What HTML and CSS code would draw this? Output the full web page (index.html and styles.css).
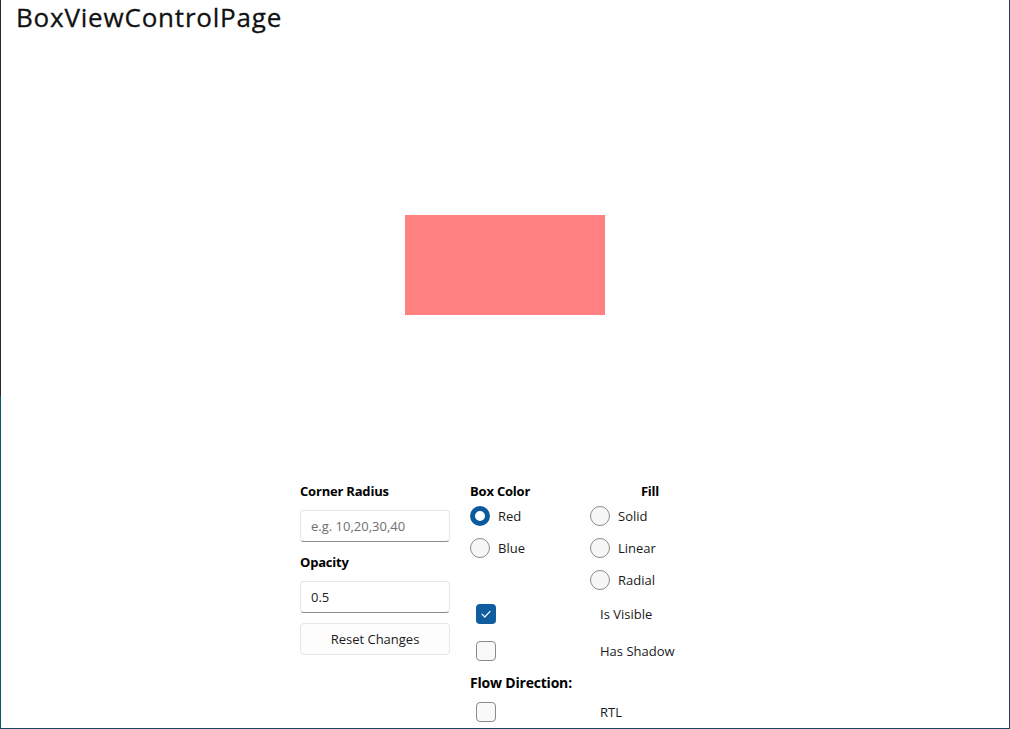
FILE: index.html
```html
<!DOCTYPE html>
<html>
<head>
<meta charset="utf-8">
<link rel="stylesheet" href="styles.css">
</head>
<body>
<div class="frame">
  <h1 class="title">BoxViewControlPage</h1>
  <div class="stage">
    <div class="box"></div>
  </div>
  <div class="controls">
    <div class="left">
      <div class="label">Corner Radius</div>
      <div class="entry placeholder">e.g. 10,20,30,40</div>
      <div class="label opacity">Opacity</div>
      <div class="entry">0.5</div>
      <div class="button">Reset Changes</div>
    </div>
    <div class="right">
      <div class="label">Box Color</div>
      <div class="label center">Fill</div>

      <div class="radio-row"><span class="radio checked"></span><span>Red</span></div>
      <div class="radio-row"><span class="radio"></span><span>Solid</span></div>

      <div class="radio-row"><span class="radio"></span><span>Blue</span></div>
      <div class="radio-row"><span class="radio"></span><span>Linear</span></div>

      <div class="radio-row"></div>
      <div class="radio-row"><span class="radio"></span><span>Radial</span></div>

      <div class="check-cell"><span class="check checked"><svg viewBox="0 0 20 20" width="20" height="20"><path d="M6 10.2 L8.8 13 L14 7.4" fill="none" stroke="#fff" stroke-width="1.2" stroke-linecap="round" stroke-linejoin="round"/></svg></span></div>
      <div class="check-label">Is Visible</div>

      <div class="check-cell"><span class="check"></span></div>
      <div class="check-label">Has Shadow</div>

      <div class="label flow">Flow Direction:</div>

      <div class="check-cell"><span class="check"></span></div>
      <div class="check-label">RTL</div>
    </div>
  </div>
</div>
</body>
</html>
```
FILE: styles.css
```css
* { box-sizing: border-box; }
html, body { margin: 0; padding: 0; }
body {
  width: 1010px;
  height: 729px;
  overflow: hidden;
  background: #fff;
  font-family: "Open Sans", "Noto Sans", sans-serif;
  color: #1a1a1a;
}
.frame {
  width: 1010px;
  height: 729px;
  border-right: 1px solid #1d3d63;
  border-bottom: 1px solid #1b4a60;
  background:
    linear-gradient(#2a2a2a, #2a2a2a) left top / 1px 396px no-repeat,
    linear-gradient(#0e5a72, #0e5a72) left 396px / 1px 333px no-repeat,
    #fff;
  padding-left: 1px;
  display: flex;
  flex-direction: column;
  overflow: hidden;
}
.frame > * { flex: none; }
.title {
  margin: 0;
  padding: 0 0 0 15px;
  height: 40px;
  font-size: 26px;
  line-height: 34px;
  font-weight: 500;
  letter-spacing: 0.8px;
  color: #111;
  -webkit-text-stroke: 0.3px #111;
}
.stage {
  display: flex;
  justify-content: center;
  padding-top: 175px;
  height: 443px;
}
.box {
  width: 200px;
  height: 100px;
  background: #ff8080;
}
.controls {
  display: flex;
  justify-content: center;
  gap: 20px;
}
.left {
  width: 150px;
  display: flex;
  flex-direction: column;
}
.label {
  font-size: 13px;
  font-weight: 700;
  line-height: 17px;
  height: 17px;
  color: #000;
  letter-spacing: -0.2px;
}
.label.center { text-align: center; }
.left .label:first-child { margin-bottom: 10px; }
.label.opacity { margin-top: 12px; margin-bottom: 10px; }
.entry {
  height: 32px;
  border: 1px solid #e6e6e6;
  border-bottom: 1px solid #8a8a8a;
  border-radius: 4px;
  padding: 0 10px;
  font-size: 13px;
  line-height: 30px;
  color: #1a1a1a;
  background: #fff;
}
.entry.placeholder { color: #6f6f6f; }
.button {
  margin-top: 10px;
  height: 32px;
  border: 1px solid #e6e6e6;
  border-radius: 4px;
  font-size: 13px;
  line-height: 30px;
  text-align: center;
  color: #1a1a1a;
  background: #fdfdfd;
}
.right {
  display: grid;
  grid-template-columns: 120px 120px;
  grid-template-rows: 17px 32px 32px 32px 36px 38px 24px 36px;
}
.radio-row {
  display: flex;
  align-items: center;
  gap: 8px;
  font-size: 13px;
  color: #1a1a1a;
}
.radio {
  width: 20px;
  height: 20px;
  border-radius: 50%;
  border: 1px solid #8a8a8a;
  background: #f7f7f7;
  flex: none;
}
.radio.checked {
  border: 5px solid #0a5a9c;
  background: #fff;
}
.check-cell {
  display: flex;
  align-items: center;
  padding-left: 6px;
}
.check {
  width: 20px;
  height: 20px;
  border-radius: 4px;
  border: 1px solid #8a8a8a;
  background: #f9f9f9;
  display: block;
}
.check.checked {
  border: 0;
  background: #0f5c9f;
}
.check svg { display: block; }
.check-label {
  display: flex;
  align-items: center;
  padding-left: 10px;
  font-size: 13px;
  color: #1a1a1a;
}
.label.flow {
  grid-column: 1 / span 2;
  font-size: 14px;
  align-self: center;
}
```
